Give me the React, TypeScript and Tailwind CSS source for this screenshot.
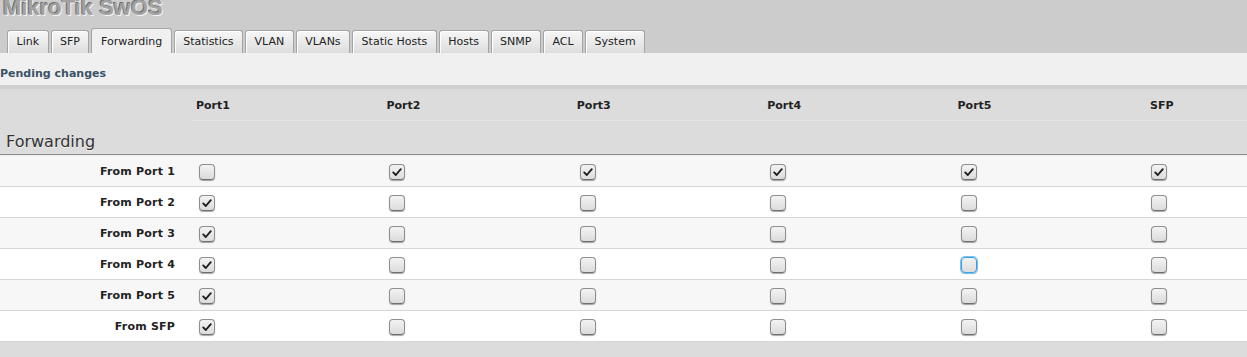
import { useState } from "react";

const TABS = [
	"Link",
	"SFP",
	"Forwarding",
	"Statistics",
	"VLAN",
	"VLANs",
	"Static Hosts",
	"Hosts",
	"SNMP",
	"ACL",
	"System",
];

const PORTS = ["Port1", "Port2", "Port3", "Port4", "Port5", "SFP"];
const ROWS = ["From Port 1", "From Port 2", "From Port 3", "From Port 4", "From Port 5", "From SFP"];

function initialMatrix() {
	return ROWS.map((_, r) => PORTS.map((_, c) => (r === 0 ? c !== 0 : c === 0)));
}

function Checkbox({
	checked,
	focused,
	onToggle,
}: {
	checked: boolean;
	focused?: boolean;
	onToggle: () => void;
}) {
	return (
		<button
			type="button"
			onClick={onToggle}
			className={`flex h-[16px] w-[16px] items-center justify-center rounded-[4px] border bg-gradient-to-b from-[#f3f3f3] to-[#dcdcdc] shadow-[0_1px_1px_rgba(0,0,0,0.35)] ${
				focused
					? "border-[#3c9ee0] ring-1 ring-[#7cc0ee]"
					: "border-[#8e8e8e] border-b-[#6e6e6e]"
			}`}
		>
			{checked && (
				<svg width="12" height="12" viewBox="0 0 12 12" fill="none">
					<path
						d="M2.2 6.4 L4.8 9 L9.8 3.2"
						stroke="#1e1e1e"
						strokeWidth="1.9"
						strokeLinecap="round"
						strokeLinejoin="round"
					/>
				</svg>
			)}
		</button>
	);
}

export default function App() {
	const [matrix, setMatrix] = useState(initialMatrix);

	const toggle = (r: number, c: number) =>
		setMatrix((m) => m.map((row, ri) => row.map((v, ci) => (ri === r && ci === c ? !v : v))));

	return (
		<div className="flex h-[357px] w-full flex-col overflow-hidden bg-[#cccccc] font-['DejaVu_Sans',sans-serif] text-[11px] text-[#222]">
			<div className="h-[28px] shrink-0 pl-[3px]">
				<div className="-mt-[3px] font-['Liberation_Sans',Arial,sans-serif] text-[22px] font-bold leading-[22px] text-[#a3a3a3] [text-shadow:-1px_-1px_0_#6f6f6f,1px_1px_0_#f4f4f4]">
					MikroTik SwOS
				</div>
			</div>

			<div className="flex h-[25px] shrink-0 items-end gap-[2px] pl-[7px]">
				{TABS.map((tab) =>
					tab === "Forwarding" ? (
						<div
							key={tab}
							className="flex h-[25px] items-center rounded-t-[3px] border border-b-0 border-[#a4a4a4] bg-[#f0f0f0] px-[8.5px] pt-[2px]"
						>
							{tab}
						</div>
					) : (
						<div
							key={tab}
							className="flex h-[23px] items-center rounded-t-[3px] border border-b-0 border-[#a4a4a4] bg-gradient-to-b from-[#f7f7f7] to-[#dddddd] px-[8.5px] pt-[1px] shadow-[inset_1px_1px_0_#ffffff]"
						>
							{tab}
						</div>
					),
				)}
			</div>

			<div className="h-[32px] shrink-0 bg-[#f0f0f0] pt-[14px] font-bold leading-[13px] text-[#3b5366]">
				Pending changes
			</div>
			<div className="h-[4px] shrink-0 bg-[#cfcfcf]" />

			<div className="flex flex-1 flex-col bg-[#dcdcdc]">
				<div className="grid h-[31px] grid-cols-[190px_repeat(6,190.4px)] items-center pt-[4px]">
					<div />
					{PORTS.map((p, c) => (
						<div key={p} className={`font-bold ${c === 5 ? "pl-[8px]" : "pl-[6px]"}`}>
							{p}
						</div>
					))}
				</div>
				<div className="ml-[192px] h-px bg-[#e5e5e5]" />
				<div className="h-[33px] pl-[6px] pt-[12px] text-[16px] leading-[18px] text-[#333] [text-shadow:0_1px_0_#f0f0f0]">
					Forwarding
				</div>
				<div className="h-px bg-[#8c8c8c]" />
				<div className="h-px bg-[#ececec]" />

				{ROWS.map((label, r) => (
					<div
						key={label}
						className={`grid h-[31px] grid-cols-[190px_repeat(6,190.4px)] items-center border-b border-[#d6d6d6] ${
							r % 2 === 0 ? "bg-[#f7f7f7]" : "bg-white"
						}`}
					>
						<div className="pr-[15px] pt-[2px] text-right font-bold tracking-[0.2px]">{label}</div>
						{PORTS.map((p, c) => (
							<div key={p} className="flex w-[34px] justify-center pt-[1px]">
								<Checkbox
									checked={matrix[r][c]}
									focused={r === 3 && c === 4}
									onToggle={() => toggle(r, c)}
								/>
							</div>
						))}
					</div>
				))}
			</div>
		</div>
	);
}
